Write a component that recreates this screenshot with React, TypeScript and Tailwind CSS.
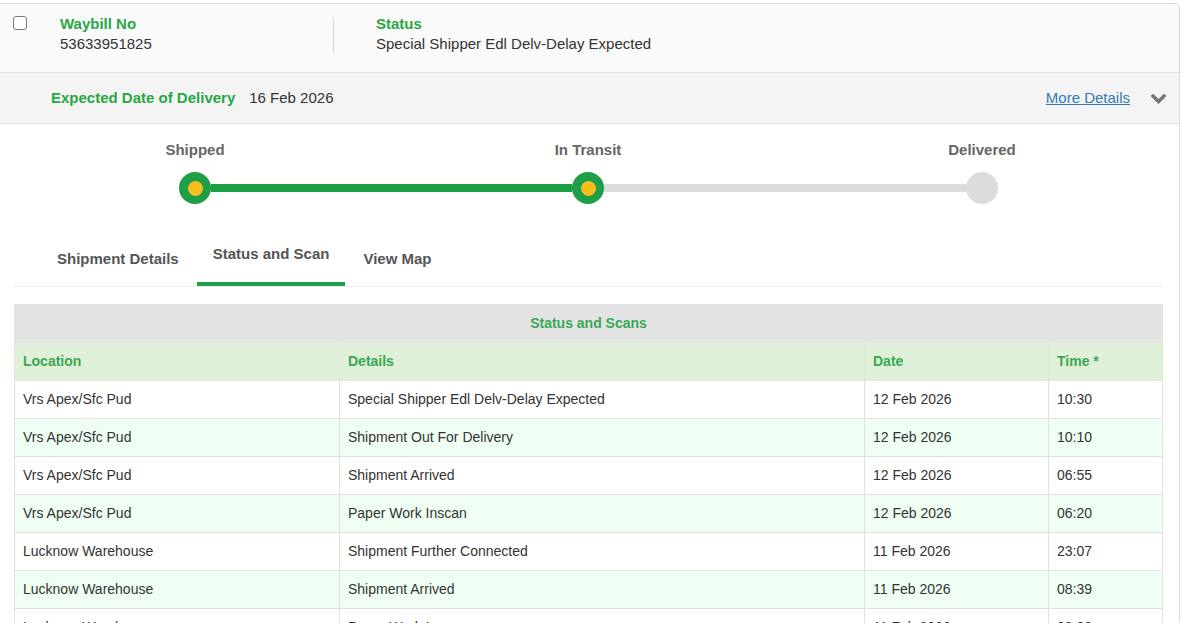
const scans = [
  ["Vrs Apex/Sfc Pud", "Special Shipper Edl Delv-Delay Expected", "12 Feb 2026", "10:30"],
  ["Vrs Apex/Sfc Pud", "Shipment Out For Delivery", "12 Feb 2026", "10:10"],
  ["Vrs Apex/Sfc Pud", "Shipment Arrived", "12 Feb 2026", "06:55"],
  ["Vrs Apex/Sfc Pud", "Paper Work Inscan", "12 Feb 2026", "06:20"],
  ["Lucknow Warehouse", "Shipment Further Connected", "11 Feb 2026", "23:07"],
  ["Lucknow Warehouse", "Shipment Arrived", "11 Feb 2026", "08:39"],
  ["Lucknow Warehouse", "Paper Work Inscan", "11 Feb 2026", "08:00"],
];

function Stop({ done }: { done: boolean }) {
  if (!done) {
    return <div className="w-8 h-8 shrink-0 rounded-full bg-[#dcdcdc]" />;
  }
  return (
    <div className="w-8 h-8 shrink-0 rounded-full bg-[#1f9e48] flex items-center justify-center">
      <div className="w-[15px] h-[15px] rounded-full bg-[#f7bd1d]" />
    </div>
  );
}

function Label({ text }: { text: string }) {
  return (
    <div className="w-8 shrink-0 flex justify-center">
      <span className="whitespace-nowrap text-[15px] font-bold text-[#666]">{text}</span>
    </div>
  );
}

export default function App() {
  return (
    <div
      className="min-h-screen bg-white pt-[3px] text-[#333]"
      style={{ fontFamily: '"Liberation Sans", Arial, sans-serif' }}
    >
      <div className="w-[1180px] border-t border-r border-[#dcdcdc] rounded-tr-[5px] bg-white overflow-hidden">
        {/* Waybill header */}
        <div className="h-[69px] bg-[#fafafa] border-b border-[#e3e3e3] flex items-start pt-[10px]">
          <div className="w-[14px] h-[14px] mt-[2px] ml-[13px] rounded-[3px] border border-[#777] bg-white" />
          <div className="ml-[33px] w-[273px] leading-[20px]">
            <div className="text-[15px] font-bold text-[#28a745]">Waybill No</div>
            <div className="text-[15px] text-[#333]">53633951825</div>
          </div>
          <div className="w-px h-[35px] mt-[4px] bg-[#d5d5d5]" />
          <div className="ml-[42px] leading-[20px]">
            <div className="text-[15px] font-bold text-[#28a745]">Status</div>
            <div className="text-[15px] text-[#333]">Special Shipper Edl Delv-Delay Expected</div>
          </div>
        </div>

        {/* Expected delivery */}
        <div className="h-[51px] bg-[#f4f4f4] border-b border-[#e3e3e3] flex items-center pl-[51px] pr-[13px]">
          <span className="text-[15px] font-bold text-[#28a745]">Expected Date of Delivery</span>
          <span className="ml-[14px] text-[15px] text-[#333]">16 Feb 2026</span>
          <a className="ml-auto text-[15px] text-[#337ab7] underline">More Details</a>
          <svg className="ml-[21px] mt-[2px]" width="15" height="10" viewBox="0 0 15 10">
            <path d="M2 2 L7.5 7.5 L13 2" fill="none" stroke="#777" strokeWidth="3.4" strokeLinecap="square" />
          </svg>
        </div>

        {/* Progress tracker */}
        <div className="pl-[179px] pt-[17px]">
          <div className="flex h-[18px] items-center">
            <Label text="Shipped" />
            <div className="w-[361px] shrink-0" />
            <Label text="In Transit" />
            <div className="w-[362px] shrink-0" />
            <Label text="Delivered" />
          </div>
          <div className="flex items-center mt-[13px]">
            <Stop done />
            <div className="w-[361px] h-[8px] shrink-0 bg-[#1f9e48]" />
            <Stop done />
            <div className="w-[362px] h-[8px] shrink-0 bg-[#dcdcdc]" />
            <Stop done={false} />
          </div>
        </div>

        <div className="pl-[14px] pr-[17px]">
          {/* Tabs */}
          <div className="mt-[41px] flex items-end border-b border-[#eeeeee] pl-[27px]">
            <div className="px-4 pb-[18px] text-[15px] leading-[18px] font-bold text-[#555]">
              Shipment Details
            </div>
            <div className="ml-[2px] px-4 pb-[19px] border-b-4 border-[#1f9e48] text-[15px] leading-[18px] font-bold text-[#555]">
              Status and Scan
            </div>
            <div className="ml-[2px] px-4 pb-[18px] text-[15px] leading-[18px] font-bold text-[#555]">
              View Map
            </div>
          </div>

          {/* Scans table */}
          <table className="mt-[17px] w-[1148px] table-fixed border-collapse text-[14px]">
            <colgroup>
              <col className="w-[325px]" />
              <col className="w-[525px]" />
              <col className="w-[184px]" />
              <col className="w-[114px]" />
            </colgroup>
            <thead>
              <tr className="h-[38px] bg-[#e3e3e3]">
                <th colSpan={4} className="border border-[#e3e3e3] text-center font-bold text-[#3aa757]">
                  Status and Scans
                </th>
              </tr>
              <tr className="h-[38px] bg-[#dff0d8]">
                <th className="border border-[#e2e8df] px-2 text-left font-bold text-[#3aa757]">Location</th>
                <th className="border border-[#e2e8df] px-2 text-left font-bold text-[#3aa757]">Details</th>
                <th className="border border-[#e2e8df] px-2 text-left font-bold text-[#3aa757]">Date</th>
                <th className="border border-[#e2e8df] px-2 text-left font-bold text-[#3aa757]">Time *</th>
              </tr>
            </thead>
            <tbody>
              {scans.map((row, i) => (
                <tr key={i} className={i % 2 === 1 ? "h-[38px] bg-[#f0fff4]" : "h-[38px] bg-white"}>
                  {row.map((cell, j) => (
                    <td key={j} className="border border-[#e0e0e0] px-2 text-[#333]">
                      {cell}
                    </td>
                  ))}
                </tr>
              ))}
            </tbody>
          </table>
        </div>
      </div>
    </div>
  );
}
